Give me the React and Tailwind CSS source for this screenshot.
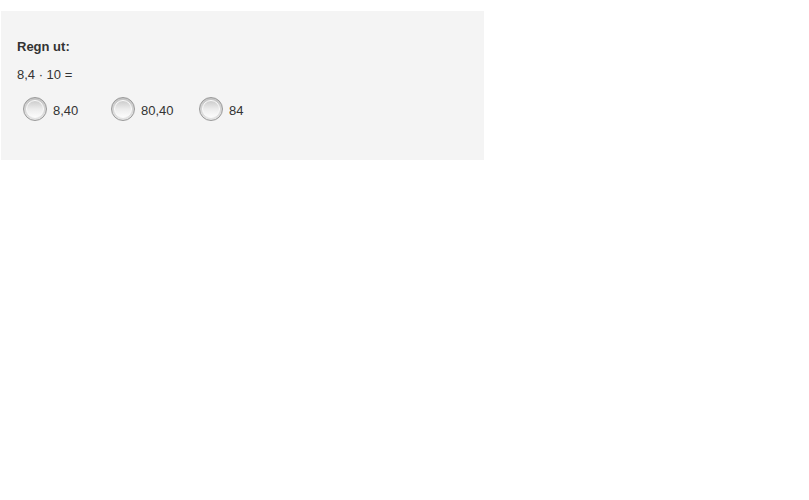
import React from "react";

const OPTIONS = ["8,40", "80,40", "84"];

function Radio() {
  return (
    <span className="w-6 h-6 rounded-full border border-[#9a9a9a] bg-gradient-to-b from-[#c4c4c4] to-[#e6e6e6] flex items-center justify-center">
      <span className="w-[18px] h-[18px] rounded-full border border-[#fbfbfb] bg-gradient-to-b from-[#cdcdcd] via-[#ececec] to-[#fbfbfb]" />
    </span>
  );
}

export default function App() {
  return (
    <div className="bg-white min-h-screen pt-[11px] pl-px font-['Liberation_Sans',Arial,sans-serif] text-[13px] text-[#333]">
      <div className="w-[483px] h-[149px] bg-[#f4f4f4] pl-4 pt-[28px]">
        <p className="font-bold leading-[15px]">Regn ut:</p>
        <p className="leading-[15px] mt-[13px]">8,4 · 10 =</p>
        <div className="flex mt-[15px] pl-[6px]">
          {OPTIONS.map((o) => (
            <label key={o} className="w-[88px] flex items-center gap-[6px]">
              <Radio />
              <span className="leading-[15px] pt-[2px]">{o}</span>
            </label>
          ))}
        </div>
      </div>
    </div>
  );
}
